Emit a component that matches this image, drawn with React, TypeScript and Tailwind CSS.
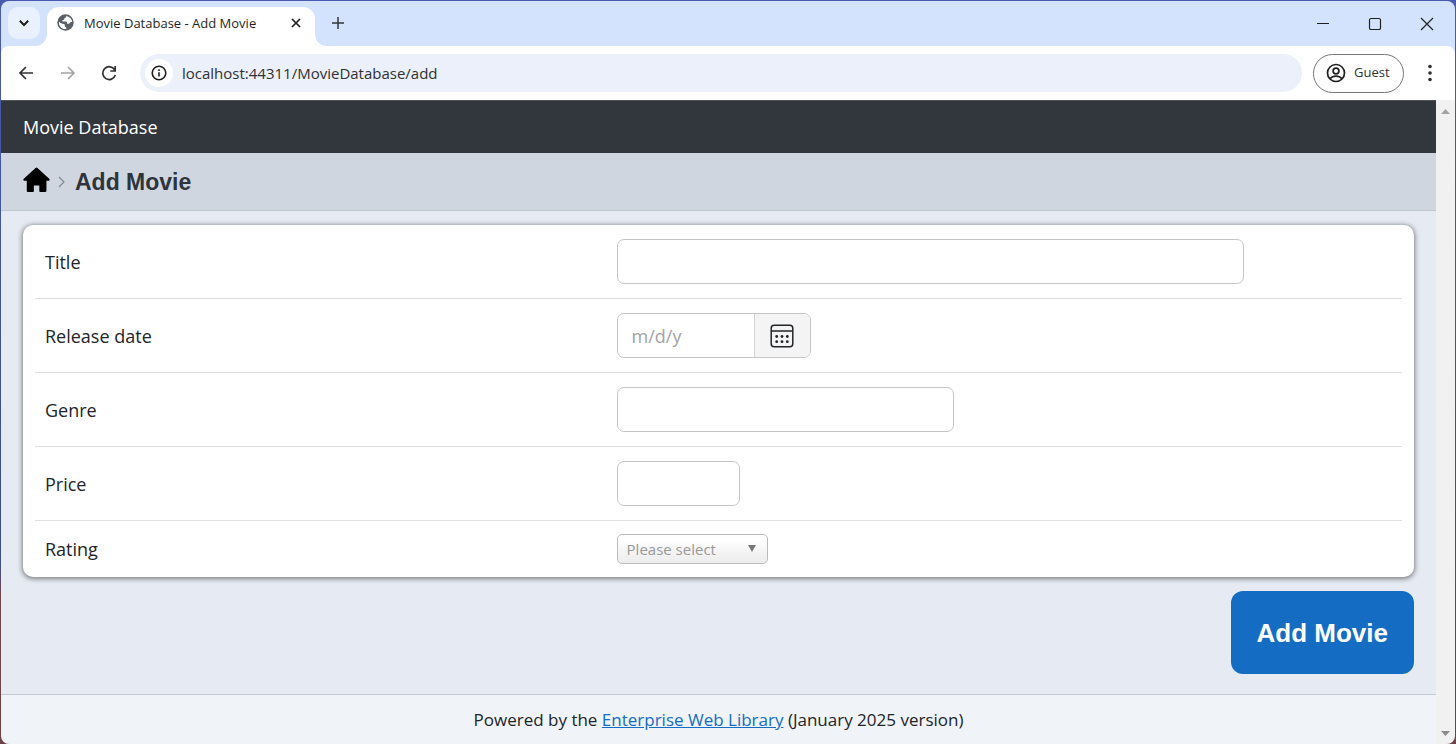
import type { ReactNode } from "react";

const iconButton = "flex shrink-0 items-center justify-center";

function TabStrip() {
  return (
    <div className="flex h-[45px] shrink-0 items-end bg-[#d3e3fd]">
      <div className="flex h-[45px] w-[46px] shrink-0 items-center rounded-br-xl pb-px pl-[7px]">
        <button aria-label="Search tabs" className={`${iconButton} h-8 w-8 rounded-[10px] bg-[#e9f1fe]`}>
          <svg width="12" height="8" viewBox="0 0 12 8" fill="none" stroke="#1f1f1f" strokeWidth="2">
            <path d="M1.8 1.8 6 6l4.2-4.2" />
          </svg>
        </button>
      </div>
      <div className="relative flex h-[39px] w-[268px] items-center rounded-t-xl bg-white pr-[11px] pb-2 pl-[10px]">
        <svg className="absolute bottom-0 -left-3" width="12" height="12" viewBox="0 0 12 12">
          <path d="M12 0v12H0A12 12 0 0 0 12 0Z" fill="#fff" />
        </svg>
        <svg className="absolute -right-3 bottom-0" width="12" height="12" viewBox="0 0 12 12">
          <path d="M0 0v12h12A12 12 0 0 1 0 0Z" fill="#fff" />
        </svg>
        <svg className="shrink-0" width="17" height="17" viewBox="0 0 17 17">
          <circle cx="8.5" cy="8.5" r="8.2" fill="#5b6066" />
          <path
            d="M9.2 1.9c.2 1-.3 1.7-1.3 1.9-.6.2-.5 1-.7 1.6-.3.7-1.3.4-1.8.9-.4.5 0 1.3.8 1.3h2.4c.9 0 1.4.5 1.4 1.3 0 .9.6 1 1.300.9 1.100-.1 1.500-1 2.100-1.600.6-.5 1.300-.3 1.800.1a6.700 6.700 0 0 0-6-6.400ZM2 7.800c-.4 3.500 1.600 6.300 4.800 7.100.9.200 1.800.200 2.600 0-.1-.9-.1-1.600-.9-1.900-.7-.300-.8-.8-.7-1.500.1-.8-.3-1.300-1.100-1.500C4.800 9.600 3.500 9.200 2 7.800Z"
            fill="#fff"
          />
        </svg>
        <span className="ml-[10px] flex-1 whitespace-nowrap text-[13px] leading-5 text-[#1f1f1f]">
          Movie Database - Add Movie
        </span>
        <button aria-label="Close tab" className={`${iconButton} h-4 w-4`}>
          <svg width="10" height="10" viewBox="0 0 10 10" stroke="#1f1f1f" strokeWidth="1.7">
            <path d="m1 1 8 8M9 1 1 9" />
          </svg>
        </button>
      </div>
      <button aria-label="New tab" className={`${iconButton} mb-[11px] ml-[15px] h-6 w-4`}>
        <svg width="14" height="14" viewBox="0 0 14 14" stroke="#333639" strokeWidth="1.5">
          <path d="M7 1v12M1 7h12" />
        </svg>
      </button>
      <div className="mb-[14px] ml-auto flex items-center gap-9 pr-5 text-[#1f1f1f]">
        <button aria-label="Minimize" className={`${iconButton} h-4 w-4`}>
          <svg width="14" height="14" viewBox="0 0 14 14" stroke="currentColor">
            <path d="M1 6.5h12" />
          </svg>
        </button>
        <button aria-label="Maximize" className={`${iconButton} h-4 w-4`}>
          <svg width="14" height="14" viewBox="0 0 14 14" fill="none" stroke="currentColor" strokeWidth="1.2">
            <rect x="1.5" y="1.5" width="11" height="11" rx="1.6" />
          </svg>
        </button>
        <button aria-label="Close" className={`${iconButton} h-4 w-4`}>
          <svg width="14" height="14" viewBox="0 0 14 14" stroke="currentColor" strokeWidth="1.2">
            <path d="m1 1 12 12M13 1 1 13" />
          </svg>
        </button>
      </div>
    </div>
  );
}

function Toolbar() {
  return (
    <div className="bg-[#d3e3fd]">
      <div className="flex h-[54px] items-center rounded-t-lg bg-white pr-[17px] pl-[17px]">
        <button aria-label="Back" className={`${iconButton} h-4 w-4`}>
          <svg width="16" height="14" viewBox="0 0 16 14" fill="none" stroke="#303134" strokeWidth="1.7">
            <path d="M15 7H2M8 1 2 7l6 6" />
          </svg>
        </button>
        <button aria-label="Forward" className={`${iconButton} ml-[26px] h-4 w-4`}>
          <svg width="16" height="14" viewBox="0 0 16 14" fill="none" stroke="#a3a4a6" strokeWidth="1.7">
            <path d="M1 7h13M8 1l6 6-6 6" />
          </svg>
        </button>
        <button aria-label="Reload" className={`${iconButton} ml-[25px] h-4 w-4`}>
          <svg width="16" height="16" viewBox="0 0 16 16" fill="none" stroke="#303134" strokeWidth="1.7">
            <path d="M14.300 10a6.400 6.400 0 1 1-.6-5.100l.4.800M14.200 1v5H9.300" />
          </svg>
        </button>
        <div className="ml-[23px] flex h-[38px] flex-1 items-center rounded-full bg-[#ebf0fa] pl-[5px]">
          <button aria-label="Site information" className={`${iconButton} h-7 w-7 rounded-full bg-white`}>
            <svg width="16" height="16" viewBox="0 0 17 17" fill="none" stroke="#1f1f1f" strokeWidth="1.7">
              <circle cx="8.5" cy="8.5" r="7.2" />
              <path d="M8.5 7.600v4.600M8.5 4.600v1.800" />
            </svg>
          </button>
          <input
            aria-label="Address"
            defaultValue="localhost:44311/MovieDatabase/add"
            className="ml-[9px] flex-1 bg-transparent text-[15px] leading-6 text-[#303134] outline-none"
          />
        </div>
        <button className="ml-[11px] flex h-[39px] w-[91px] items-center gap-2 rounded-full border border-[#747775] pl-3 text-[13px] text-[#303134]">
          <svg width="20" height="20" viewBox="0 0 20 20" fill="none" stroke="#1f1f1f" strokeWidth="1.7">
            <circle cx="10" cy="10" r="8.5" />
            <circle cx="10" cy="8" r="2.900" />
            <path d="M4 15.800c3-3.600 9-3.600 12 0" />
          </svg>
          Guest
        </button>
        <button aria-label="Browser menu" className={`${iconButton} ml-[18px] h-6 w-4`}>
          <svg width="4" height="18" viewBox="0 0 4 18" fill="#303134">
            <circle cx="2" cy="2.5" r="1.800" />
            <circle cx="2" cy="9" r="1.800" />
            <circle cx="2" cy="15.500" r="1.800" />
          </svg>
        </button>
      </div>
    </div>
  );
}

const field = "h-[45px] max-w-full rounded-[7px] border border-[#c4c6c8] bg-white px-[14px] text-[18px] outline-none";

function FormRow({ label, id, children }: { label: string; id: string; children: ReactNode }) {
  return (
    <div className="grid grid-cols-[5fr_7fr] items-center border-b border-[#dfdfe0] py-[14px] last:border-b-0 last:py-[13px]">
      <label htmlFor={id} className="pl-[10px]">
        {label}
      </label>
      <div className="flex pl-3">{children}</div>
    </div>
  );
}

function MovieForm() {
  return (
    <form className="flex-1 bg-[#e6ebf3] px-[22px] pt-[14px] pb-5" onSubmit={(e) => e.preventDefault()}>
      <div className="rounded-[10px] bg-white px-3 shadow-[0_1px_5px_1px_rgba(0,0,0,0.45)]">
        <FormRow label="Title" id="title">
          <input id="title" className={`${field} w-[627px]`} />
        </FormRow>
        <FormRow label="Release date" id="release">
          <div className="flex h-[45px] w-[194px] overflow-hidden rounded-[7px] border border-[#c4c6c8]">
            <input
              id="release"
              placeholder="m/d/y"
              className="min-w-0 flex-1 px-[14px] text-[18px] outline-none placeholder:text-[#a3a3a3]"
            />
            <button
              type="button"
              aria-label="Open calendar"
              className={`${iconButton} w-14 border-l border-[#d3d4d5] bg-[#f4f4f4]`}
            >
              <svg width="24" height="24" viewBox="0 0 24 24" fill="none" stroke="#212529" strokeWidth="1.5">
                <rect x="1.2" y="1.2" width="21.6" height="21.6" rx="3" />
                <path d="M1.2 7h21.6" />
                <g fill="#212529" stroke="none">
                  <circle cx="6.7" cy="12.5" r="1.4" />
                  <circle cx="12" cy="12.5" r="1.4" />
                  <circle cx="17.3" cy="12.5" r="1.4" />
                  <circle cx="6.7" cy="17.7" r="1.4" />
                  <circle cx="12" cy="17.7" r="1.4" />
                  <circle cx="17.3" cy="17.7" r="1.4" />
                </g>
              </svg>
            </button>
          </div>
        </FormRow>
        <FormRow label="Genre" id="genre">
          <input id="genre" className={`${field} w-[337px]`} />
        </FormRow>
        <FormRow label="Price" id="price">
          <input id="price" className={`${field} w-[123px]`} />
        </FormRow>
        <FormRow label="Rating" id="rating">
          <div className="relative">
            <select
              id="rating"
              className="block h-[30px] w-[151px] appearance-none rounded-[5px] border border-[#bbb] bg-linear-to-b from-white from-20% via-[#f6f6f6] via-50% to-[#ececec] px-[9px] text-[15px] leading-5 text-[#999] outline-none"
            >
              <option>Please select</option>
            </select>
            <svg className="pointer-events-none absolute top-[11px] right-3" width="8" height="7" viewBox="0 0 8 7">
              <path d="M0 0h8L4 7Z" fill="#777" />
            </svg>
          </div>
        </FormRow>
      </div>
      <div className="mt-[14px] flex justify-end">
        <button className="h-[83px] rounded-xl bg-[#146dc3] px-[26px] font-['Liberation_Sans',Arial,sans-serif] text-[26px] font-bold text-white">
          Add Movie
        </button>
      </div>
    </form>
  );
}

export default function App() {
  return (
    <div className="flex min-h-screen flex-col bg-linear-to-b from-[#4a5ab0] from-0% via-[#3c4d92] via-75% to-[#6b4348] to-80% p-px font-['Open_Sans','Noto_Sans',sans-serif]">
      <div className="flex flex-1 flex-col overflow-hidden rounded-lg">
        <TabStrip />
        <Toolbar />
        <div className="flex flex-1">
          <div className="flex flex-1 flex-col text-[18px] leading-[26px] text-[#212529]">
            <header className="h-[53px] border-t border-[#4d5257] bg-[#32373e] px-[22px] py-[13px] text-white">
              Movie Database
            </header>
            <nav aria-label="Breadcrumb" className="flex h-[58px] items-center border-b border-[#c1c7cf] bg-[#cfd6e0] px-[22px]">
              <a href="#home" aria-label="Home" className="mb-1">
                <svg width="27" height="26" viewBox="0 0 28 26">
                  <path
                    d="M13 .5a1.500 1.500 0 0 1 2 0L27.200 11.600c.9.900.4 2.200-.8 2.200H24.300V23.800c0 1-.6 1.600-1.600 1.600H18.200c-.8 0-1.300-.5-1.300-1.300V18.600h-5.600v5.500c0 .8-.5 1.300-1.300 1.300H5.500c-1 0-1.600-.6-1.600-1.600V13.800H1.600C.4 13.800-.1 12.500.8 11.600Z"
                    fill="#000"
                  />
                </svg>
              </a>
              <svg className="ml-2" width="7" height="12" viewBox="0 0 7 12" fill="none" stroke="#84898f" strokeWidth="1.2">
                <path d="m1 1 5 5-5 5" />
              </svg>
              <h1 className="ml-[10px] font-['Liberation_Sans',Arial,sans-serif] text-[23px] font-bold text-[#2f343b]">
                Add Movie
              </h1>
            </nav>
            <MovieForm />
            <footer className="border-t border-[#c3c9d1] bg-[#f0f3f8] px-[22px] py-[12px] text-center text-[17px] leading-[25px]">
              Powered by the{" "}
              <a href="#library" className="text-[#146dc3] underline">
                Enterprise Web Library
              </a>{" "}
              (January 2025 version)
            </footer>
          </div>
          <div className="flex w-[19px] shrink-0 flex-col items-center justify-between bg-[#f1f1f1] pt-[9px] pb-2">
            <svg width="9" height="5" viewBox="0 0 9 5">
              <path d="M0 5 4.5 0 9 5Z" fill="#a3a3a3" />
            </svg>
            <svg width="9" height="5" viewBox="0 0 9 5">
              <path d="M0 0h9L4.5 5Z" fill="#8b8b8b" />
            </svg>
          </div>
        </div>
      </div>
    </div>
  );
}
